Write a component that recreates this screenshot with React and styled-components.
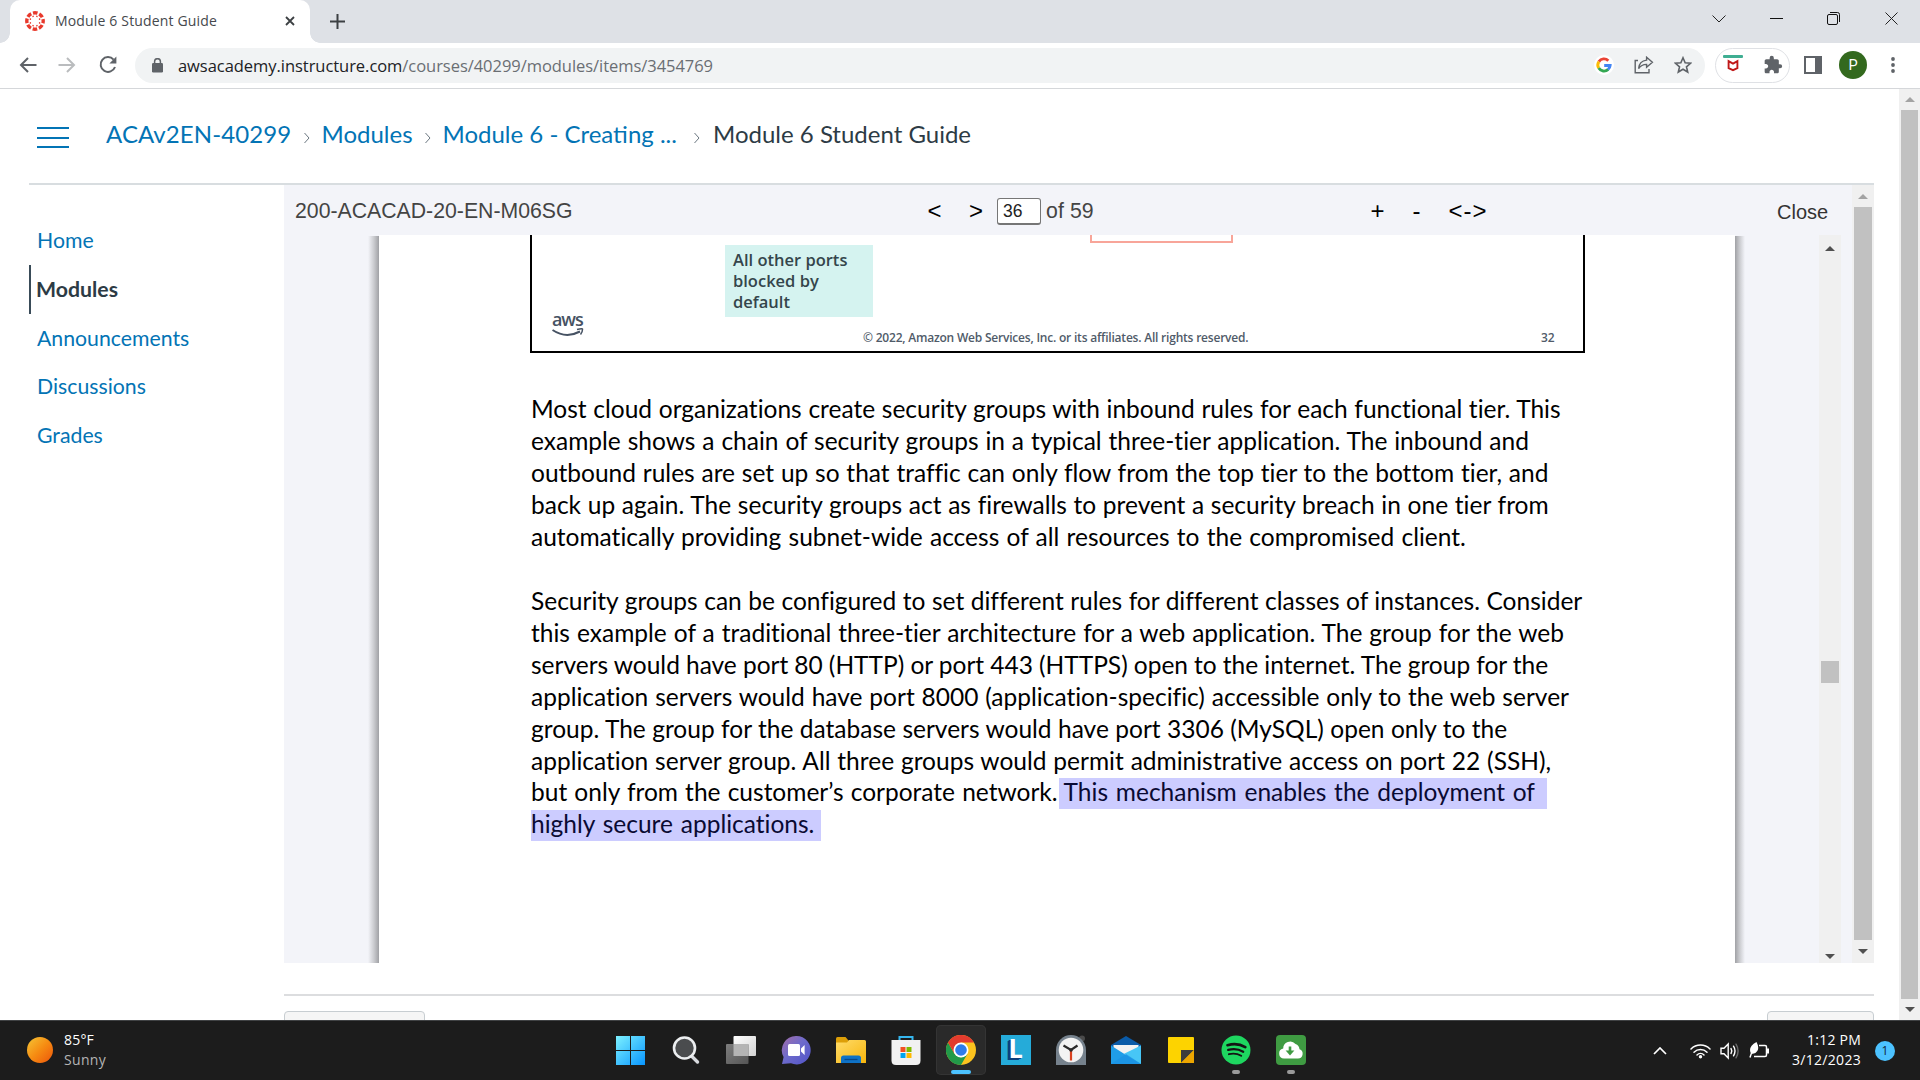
import React from "react";
import styled, { createGlobalStyle, css } from "styled-components";

const Global = createGlobalStyle`
  * { box-sizing: border-box; }
  html, body { margin: 0; padding: 0; }
  body { width: 1920px; height: 1080px; overflow: hidden; background: #fff; }
  svg { display: block; flex: none; }
`;

const ui = `"Open Sans", "Noto Sans", sans-serif`;
const lato = `Lato, "Open Sans", sans-serif`;
const arial = `"Liberation Sans", Arial, sans-serif`;

const Screen = styled.div`
  width: 1920px;
  height: 1080px;
  display: flex;
  flex-direction: column;
  overflow: hidden;
`;

const Txt = styled.span`
  display: inline-block;
  white-space: pre;
  letter-spacing: ${(p) => (p.$ls ? `${p.$ls}px` : "normal")};
  word-spacing: ${(p) => p.$ws || 0}px;
`;

/* ---------- browser chrome ---------- */

const TabStrip = styled.div`
  height: 43px;
  padding-left: 10px;
  display: flex;
  align-items: stretch;
  background: #dee1e6;
`;

const Tab = styled.div`
  position: relative;
  width: 300px;
  padding: 0 15px 1px 15px;
  display: flex;
  align-items: center;
  background: #fff;
  border-radius: 10px 10px 0 0;
  font: 14px/20px ${ui};
  color: #45494d;
  &::before, &::after {
    content: "";
    position: absolute;
    bottom: 0;
    width: 10px;
    height: 10px;
  }
  &::before { left: -10px; background: radial-gradient(circle at 0 0, transparent 9.5px, #fff 10px); }
  &::after { right: -10px; background: radial-gradient(circle at 100% 0, transparent 9.5px, #fff 10px); }
`;

const TabTitle = styled.div`
  flex: 1;
  padding: 0 0 1px 10px;
`;

const NewTab = styled.div`
  width: 54px;
  padding-bottom: 1px;
  display: flex;
  align-items: center;
  justify-content: center;
`;

const WindowButtons = styled.div`
  margin-left: auto;
  height: 37px;
  display: flex;
  align-items: center;
`;

const WinButton = styled.div`
  width: 57.5px;
  display: flex;
  justify-content: center;
`;

const Toolbar = styled.div`
  height: 46px;
  padding: 5px 0 6px;
  display: flex;
  align-items: center;
  background: #fff;
  border-bottom: 1px solid #d5d7da;
`;

const NavButtons = styled.div`
  width: 135px;
  padding: 0 0 1px 18.5px;
  display: flex;
  align-items: center;
  gap: 21.5px;
`;

const Omnibox = styled.div`
  width: 1570px;
  height: 35px;
  padding: 0 13.5px 0 17px;
  border-radius: 18px;
  display: flex;
  align-items: center;
  background: #f1f3f4;
`;

const Url = styled.div`
  flex: 1;
  padding: 1px 0 0 15px;
  font: 16.5px/24px ${ui};
  color: #6a6e73;
  b { font-weight: 400; color: #202124; }
`;

const OmniIcons = styled.div`
  display: flex;
  align-items: center;
  gap: 20px;
`;

const ExtPill = styled.div`
  width: 75px;
  height: 35px;
  margin: 0 14px 0 10px;
  padding: 0 6px 0 7px;
  border: 1px solid #dfe1e5;
  border-radius: 18px;
  display: flex;
  align-items: center;
  justify-content: space-between;
`;

const Avatar = styled.div`
  width: 28px;
  height: 28px;
  margin: 0 23.500px 0 17px;
  border-radius: 50%;
  background: #33691e;
  color: #fff;
  font: 14.5px/29px Roboto, ${arial};
  text-align: center;
`;

/* ---------- scroll bars ---------- */

const Rail = styled.div`
  width: ${(p) => p.$w}px;
  flex: none;
  display: flex;
  flex-direction: column;
  align-items: center;
  background: #f0f0f0;
`;

const ArrowBox = styled.div`
  height: ${(p) => p.$h}px;
  display: flex;
  align-items: center;
  justify-content: center;
  &::before {
    content: "";
    border: 5px solid transparent;
    ${(p) =>
      p.$down
        ? css`border-top-color: ${p.$c}; border-bottom: 0;`
        : css`border-bottom-color: ${p.$c}; border-top: 0;`}
  }
`;

const Thumb = styled.div`
  width: ${(p) => p.$w}px;
  height: ${(p) => p.$h}px;
  margin-top: ${(p) => p.$gap || 0}px;
  background: #c1c1c1;
`;

const Push = styled.div`
  flex: 1;
`;

/* ---------- course page ---------- */

const PageArea = styled.div`
  height: 931px;
  display: flex;
  background: #fff;
`;

const Course = styled.div`
  flex: 1;
  padding: 0 25px 0 29px;
  overflow: hidden;
`;

const CourseHeader = styled.header`
  height: 96px;
  padding: 31px 0 0 8px;
  display: flex;
  align-items: flex-start;
  border-bottom: 2px solid #d8dde0;
`;

const Burger = styled.div`
  width: 32px;
  height: 21px;
  margin: 7px 37px 0 0;
  display: flex;
  flex-direction: column;
  justify-content: space-between;
  i { height: 2px; background: #0374b5; }
`;

const Crumb = styled.div`
  width: ${(p) => p.$w}px;
  white-space: nowrap;
  font: 24px/28px ${lato};
  color: ${(p) => (p.$current ? "#2d3b45" : "#0374b5")};
`;

const CrumbSep = styled.div`
  width: ${(p) => p.$w}px;
  height: 35px;
  padding-left: 2px;
  display: flex;
  align-items: center;
  justify-content: center;
`;

const CourseBody = styled.div`
  display: flex;
`;

const SideNav = styled.nav`
  width: 255px;
  padding-top: 31px;
`;

const SideItem = styled.div`
  height: 48.75px;
  padding-left: ${(p) => (p.$active ? 5 : 8)}px;
  border-left: ${(p) => (p.$active ? "2px solid #394b58" : "0")};
  font: ${(p) => (p.$active ? 700 : 400)} 21.25px/48px ${lato};
  color: ${(p) => (p.$active ? "#2d3b45" : "#0374b5")};
`;

const Main = styled.main`
  width: 1590px;
`;

const Viewer = styled.section`
  height: 778px;
  display: flex;
  background: #f3f4f9;
`;

const ViewerPane = styled.div`
  width: 1568px;
  display: flex;
  flex-direction: column;
`;

const ViewerBar = styled.div`
  height: 50px;
  padding: 2px 0 0 11px;
  display: grid;
  grid-template-columns: 632.5px 443px 406.5px 1fr;
  align-items: center;
  font: 20px/24px ${arial};
  color: #444;
`;

const DocTitle = styled.div`
  font-size: 21.25px;
`;

const Pager = styled.div`
  display: flex;
  align-items: center;
  color: #000;
`;

const Key = styled.div`
  width: ${(p) => p.$w}px;
  font-size: 24px;
  white-space: nowrap;
`;

const PageInput = styled.div`
  width: 44px;
  height: 27px;
  margin-right: 5px;
  padding-left: 5px;
  border: 1px solid #767676;
  border-bottom-width: 2px;
  border-radius: 3px;
  background: #fff;
  color: #222;
  font-size: 17.5px;
  line-height: 25px;
`;

const PageCount = styled.div`
  font-size: 21.25px;
  color: #444;
`;

const CloseLink = styled.div`
  padding-top: 1px;
  color: #333;
`;

const DocArea = styled.div`
  flex: 1;
  display: flex;
`;

const Edge = styled.div`
  width: ${(p) => p.$w}px;
  margin-top: 1px;
  margin-left: ${(p) => p.$ml || 0}px;
  margin-right: ${(p) => p.$mr || 0}px;
  background: linear-gradient(${(p) => p.$dir}, #a0a1a5, #c9cace 45%, #f3f4f9);
`;

const Sheet = styled.article`
  width: 1356px;
  padding-left: 151px;
  background: #fff;
`;

const Slide = styled.div`
  width: 1055px;
  height: 118px;
  border: 2px solid #000;
  border-top: 0;
`;

const SlideTop = styled.div`
  height: 82px;
  display: flex;
  align-items: flex-start;
`;

const Callout = styled.div`
  width: 148px;
  height: 72px;
  margin: 10px 217px 0 193px;
  padding: 3.5px 0 0 8px;
  background: #d5f3f0;
  font: 600 16.5px/21.2px ${ui};
  color: #34454b;
`;

const RedBox = styled.div`
  width: 143px;
  height: 8px;
  border: 2px solid #f8a599;
  border-top: 0;
`;

const SlideFoot = styled.div`
  height: 34px;
  padding-left: 20px;
  display: flex;
  align-items: flex-start;
  font: 600 12px/16px ${ui};
  color: #505b69;
`;

const AwsMark = styled.div`
  flex: none;
  width: 311px;
  margin-top: -6px;
  font: 600 18px/16px ${ui};
  color: #465263;
  svg { margin-top: 1px; }
`;

const Legal = styled.div`
  flex: none;
  width: ${(p) => p.$w || 20}px;
  padding-top: 13px;
`;

const Copy = styled.p`
  margin: ${(p) => p.$mt}px 0 0 1px;
  font: 24.5px/31.94px ${lato};
  font-variant-ligatures: none;
  color: #000;
`;

const Line = styled.span`
  display: block;
  height: 31.94px;
  white-space: nowrap;
`;

const Mark = styled.span`
  display: inline-block;
  height: 30.5px;
  line-height: 27px;
  margin-left: ${(p) => p.$ml || 0}px;
  padding: 0 ${(p) => p.$pr}px 0 ${(p) => p.$pl || 0}px;
  background: #ccccff;
  color: #0a0a33;
`;

const Rule = styled.hr`
  height: 2px;
  margin: 31px 0 15px;
  border: 0;
  background: #dcdddf;
`;

const PagerRow = styled.div`
  display: flex;
  justify-content: space-between;
`;

const Stub = styled.div`
  width: ${(p) => p.$w}px;
  height: 40px;
  border: 1px solid #c7cdd1;
  border-radius: 4px;
  background: #f5f5f5;
`;

/* ---------- task bar ---------- */

const Taskbar = styled.footer`
  height: 60px;
  display: flex;
  background: #1c1c1c;
  border-top: 1px solid #404244;
  color: #fff;
  font: 14px/20px ${ui};
`;

const Weather = styled.div`
  width: 603px;
  padding: 8.5px 0 0 27px;
  display: flex;
  gap: 11px;
`;

const Sun = styled.div`
  width: 26px;
  height: 26px;
  margin-top: 7px;
  border-radius: 50%;
  background: linear-gradient(135deg, #f5c032 5%, #f68c12 50%, #ee5f0c 90%);
`;

const Muted = styled.div`
  color: #b4b4b4;
`;

const Dock = styled.div`
  display: flex;
  align-items: flex-start;
  padding-top: 4px;
`;

const DockItem = styled.div`
  width: 50px;
  height: 50px;
  margin: 0 2.5px;
  padding-top: 10px;
  display: flex;
  flex-direction: column;
  align-items: center;
  justify-content: space-between;
  border-radius: 5px;
  ${(p) => p.$active && css`background: #2a2a2a; box-shadow: inset 0 0 0 1px #343434;`}
`;

const Pill = styled.div`
  width: ${(p) => (p.$active ? 20 : 8)}px;
  height: 4px;
  margin-bottom: 1px;
  border-radius: 2px;
  background: ${(p) => (p.$active ? "#4cc2ff" : "#9a9a9a")};
`;

const Tray = styled.div`
  margin-left: auto;
  display: flex;
  align-items: center;
`;

const TraySlot = styled.div`
  width: ${(p) => p.$w}px;
  display: flex;
  justify-content: center;
`;

const Clock = styled.div`
  width: 81px;
  padding-bottom: 2px;
  text-align: right;
`;

const Badge = styled.div`
  width: 20px;
  height: 20px;
  margin: 0 25px 0 14px;
  border-radius: 50%;
  background: #4cc2ff;
  color: #10293a;
  font: 12px/20px ${ui};
  text-align: center;
`;

/* ---------- drawings ---------- */

const Favicon = () => (
  <svg width="20" height="20" viewBox="0 0 20 20">
    <circle cx="10" cy="10" r="8.2" fill="none" stroke="#e8392c" strokeWidth="3.4" strokeDasharray="4.6 1.84" strokeDashoffset="2.3" />
    {[0, 45, 90, 135, 180, 225, 270, 315].map((a) => (
      <circle key={a} cx="10" cy="5" r="0.8" fill="#e8392c" transform={`rotate(${a + 22.5} 10 10)`} />
    ))}
  </svg>
);

const Stroke = ({ w, h, d, c = "#5f6368", sw = 2 }) => (
  <svg width={w} height={h} viewBox={`0 0 ${w} ${h}`} fill="none" stroke={c} strokeWidth={sw}>
    <path d={d} />
  </svg>
);

const Chevron = () => <Stroke w={6} h={12} d="M.5 1L5 6L.5 11" c="#6b7780" sw={1} />;

const Reload = () => (
  <svg width="20" height="20" viewBox="0 0 20 20">
    <path d="M15.6 4.6A7.4 7.4 0 1 0 17 12" fill="none" stroke="#5f6368" strokeWidth="2" />
    <path d="M18.4 1.6v7h-7z" fill="#5f6368" />
  </svg>
);

const Lock = () => (
  <svg width="11" height="15" viewBox="0 0 11 15">
    <rect x="0" y="5" width="11" height="9.5" rx="1.2" fill="#5f6368" />
    <path d="M2.6 6V3.6a2.9 2.9 0 0 1 5.8 0V6" fill="none" stroke="#5f6368" strokeWidth="1.5" />
  </svg>
);

const GoogleG = () => (
  <svg width="20" height="20" viewBox="0 0 20 20">
    <circle cx="10" cy="10" r="10" fill="#fff" />
    <g fill="none" strokeWidth="2.9">
      <path d="M4.9 6.6A6.1 6.1 0 0 1 14.3 5.7" stroke="#ea4335" />
      <path d="M4.7 13.1A6.1 6.1 0 0 1 4.9 6.6" stroke="#fbbc05" />
      <path d="M14.2 14.4A6.1 6.1 0 0 1 4.7 13.1" stroke="#34a853" />
      <path d="M10.2 10.5h5.9A6.1 6.1 0 0 1 14 14.5" stroke="#4285f4" />
    </g>
  </svg>
);

const Share = () => (
  <svg width="20" height="18" viewBox="0 0 20 18" fill="none" stroke="#5f6368" strokeWidth="1.4">
    <path d="M4 4.5H1.2V16.8H15V13" />
    <path d="M12.6 1.2L18.4 6.2L12.6 11.2V8.4C8.8 8.4 6.4 9.8 4.6 12.6C5 8 7.8 4.6 12.6 4.1Z" />
  </svg>
);

const Star = () => (
  <svg width="18" height="18" viewBox="0 0 18 18" fill="none" stroke="#5f6368" strokeWidth="1.6">
    <path d="M9 1.8l2.15 4.95 5.4.5-4.1 3.55 1.25 5.25L9 13.25l-4.7 2.8 1.25-5.25-4.1-3.55 5.4-.5z" />
  </svg>
);

const McAfee = () => (
  <svg width="20" height="20" viewBox="0 0 20 20">
    <rect x="0" y="0" width="20" height="3" rx="1" fill="#3fae92" />
    <path d="M5.6 6.2L10 8.6l4.4-2.4v7L10 15.2l-4.4-2z" fill="none" stroke="#c01818" strokeWidth="1.9" />
  </svg>
);

const Puzzle = () => (
  <svg width="20" height="20" viewBox="0 0 24 24" fill="#5f6368">
    <path d="M20.5 11H19V7c0-1.1-.9-2-2-2h-4V3.5a2.5 2.5 0 0 0-5 0V5H4c-1.1 0-1.99.9-1.99 2v3.8H3.5c1.49 0 2.7 1.21 2.7 2.7s-1.21 2.7-2.7 2.7H2V20c0 1.1.9 2 2 2h3.8v-1.5c0-1.49 1.21-2.7 2.7-2.7s2.7 1.21 2.7 2.7V22H17c1.1 0 2-.9 2-2v-4h1.5a2.5 2.5 0 0 0 0-5z" />
  </svg>
);

const SidePanel = () => (
  <svg width="18" height="18" viewBox="0 0 18 18">
    <rect x="1" y="1" width="16" height="16" fill="none" stroke="#5f6368" strokeWidth="2" />
    <rect x="11" y="1" width="6" height="16" fill="#5f6368" />
  </svg>
);

const Kebab = () => (
  <svg width="4" height="18" viewBox="0 0 4 18" fill="#5f6368">
    <circle cx="2" cy="3" r="1.9" />
    <circle cx="2" cy="9" r="1.9" />
    <circle cx="2" cy="15" r="1.9" />
  </svg>
);

const WinLogo = () => (
  <svg width="30" height="30" viewBox="0 0 30 30">
    <defs>
      <linearGradient id="win" x1="0" y1="0" x2="29" y2="29" gradientUnits="userSpaceOnUse">
        <stop offset="0" stopColor="#7ff3ff" />
        <stop offset="1" stopColor="#0a97ff" />
      </linearGradient>
    </defs>
    <path fill="url(#win)" d="M0 1h14v14H0zM15 1h14v14H15zM0 16h14v14H0zM15 16h14v14H15z" />
  </svg>
);

const SearchIcon = () => (
  <svg width="30" height="30" viewBox="0 0 30 30">
    <path d="M20 20.5L26.5 27" stroke="#d7dade" strokeWidth="3.4" strokeLinecap="round" />
    <circle cx="13.5" cy="13" r="10.5" fill="#4a4c4e" stroke="#eceef0" strokeWidth="2.6" />
  </svg>
);

const TaskView = () => (
  <svg width="30" height="30" viewBox="0 0 30 30">
    <defs>
      <linearGradient id="tv" x1="0" y1="0" x2="1" y2="1"><stop offset="0" stopColor="#fff" /><stop offset="1" stopColor="#d2d2d2" /></linearGradient>
      <linearGradient id="tv2" x1="0" y1="0" x2="1" y2="1"><stop offset="0" stopColor="#7d7d7d" /><stop offset="1" stopColor="#555" /></linearGradient>
    </defs>
    <rect x="7.5" y="1" width="22.5" height="20" rx="1" fill="url(#tv)" />
    <rect x="0" y="9" width="22.5" height="20" rx="1" fill="url(#tv2)" />
    <path d="M7.5 9h15v12h-15z" fill="#b4b4b4" />
  </svg>
);

const Chat = () => (
  <svg width="30" height="30" viewBox="0 0 30 30">
    <defs>
      <linearGradient id="chat" x1="0" y1="0" x2="1" y2="1"><stop offset="0" stopColor="#a56ca6" /><stop offset=".45" stopColor="#6e6bcb" /><stop offset="1" stopColor="#5053c8" /></linearGradient>
    </defs>
    <path d="M15.5 1a14.2 14.2 0 1 1-5.5 27.3L1 29l1.6-7A14.2 14.2 0 0 1 15.5 1z" fill="url(#chat)" />
    <rect x="7" y="9" width="12" height="12" rx="1.5" fill="#fff" />
    <path d="M20 13.5l3.6-3.5v10l-3.6-3.5z" fill="#fff" />
  </svg>
);

const Folder = () => (
  <svg width="30" height="30" viewBox="0 0 30 30">
    <defs>
      <linearGradient id="fold" x1="0" y1="0" x2="1" y2="1"><stop offset="0" stopColor="#ffdc6a" /><stop offset="1" stopColor="#f7b50c" /></linearGradient>
    </defs>
    <path d="M0 3.5q0-1.5 1.5-1.5h8l3 3.5v5H0z" fill="#dd9f08" />
    <path d="M0 7.5h11l2-2.5h15.5q1.5 0 1.5 1.5V28H0z" fill="url(#fold)" />
    <path d="M5 28v-5q0-2.5 2.5-2.5h15q2.5 0 2.5 2.5v5z" fill="#0f72c6" />
    <path d="M8.5 24.5h13" stroke="#08488a" strokeWidth="1.3" />
  </svg>
);

const Store = () => (
  <svg width="30" height="30" viewBox="0 0 30 30">
    <path d="M8.5 7V2h13v5" fill="none" stroke="#35b6ee" strokeWidth="2" />
    <path d="M.5 5h29v20.5q0 4.5-4.5 4.5H5q-4.500 0-4.500-4.500z" fill="#f1f1f1" />
    <path d="M9.5 12h5v5h-5z" fill="#f25022" />
    <path d="M15.5 12h5v5h-5z" fill="#7fba00" />
    <path d="M9.5 18h5v5h-5z" fill="#00a4ef" />
    <path d="M15.5 18h5v5h-5z" fill="#ffb900" />
  </svg>
);

const Chrome = () => (
  <svg width="30" height="30" viewBox="0 0 48 48">
    <circle cx="24" cy="24" r="24" fill="#fcc31e" />
    <path d="M3.2 12L13.6 30L24 36L34.4 30L24 48A24 24 0 0 1 3.2 12z" fill="#229a49" />
    <path d="M3.2 12A24 24 0 0 1 44.8 12H24L13.6 30z" fill="#e33b2e" />
    <circle cx="24" cy="24" r="12" fill="#fff" />
    <circle cx="24" cy="24" r="9.3" fill="#2f7cea" />
  </svg>
);

const LBox = styled.div`
  width: 30px;
  height: 30px;
  background: #25abd9;
  color: #fff;
  font: 900 26px/27px ${lato};
  text-align: center;
  text-shadow: -1px 1px 0 #0c3f7c, -2px 1px 0 #0c3f7c, -3px 2px 0 #0c3f7c;
`;

const Launcher = () => <LBox>L</LBox>;

const AlarmClock = () => (
  <svg width="30" height="30" viewBox="0 0 30 30">
    <circle cx="26" cy="3.5" r="3" fill="#4a4a4a" />
    <path d="M0 30V15a15 15 0 0 1 30 0v15z" fill="#76828d" />
    <circle cx="15" cy="15" r="12.3" fill="#f3f3f3" />
    <path d="M7.5 10.5L15 15L21.5 10.5" fill="none" stroke="#2a2a2a" strokeWidth="2.2" />
    <path d="M15 15v10.5" stroke="#d9411e" strokeWidth="2.2" />
    <circle cx="15" cy="15" r="1.8" fill="#2a2a2a" />
  </svg>
);

const Mail = () => (
  <svg width="30" height="30" viewBox="0 0 30 30">
    <path d="M0 10L15 1l15 9v6H0z" fill="#0a5ba8" />
    <path d="M2.5 10h25v12h-25z" fill="#f2f2f2" />
    <path d="M0 10.5L15 20l15-9.5V29H0z" fill="#1f9de8" />
    <path d="M30 10.5V29L13 18.7z" fill="#47c6f6" />
    <path d="M30 29H0L15 19z" fill="#1c93e4" opacity=".75" />
  </svg>
);

const Sticky = () => (
  <svg width="30" height="30" viewBox="0 0 30 30">
    <rect x="2" y="2" width="26" height="26" rx="1" fill="#fdd300" />
    <path d="M15 15h13L15 28z" fill="#3d3d3d" />
    <path d="M28 15v13H15z" fill="#eda600" />
  </svg>
);

const Spotify = () => (
  <svg width="30" height="30" viewBox="0 0 30 30" fill="none" stroke="#141414" strokeLinecap="round">
    <circle cx="15" cy="15" r="14.5" fill="#1ed760" stroke="none" />
    <path d="M6.5 10.2c6-1.7 12.5-1.2 17.8 1.9" strokeWidth="2.7" />
    <path d="M7.2 14.9c5.2-1.4 10.6-.8 15 1.8" strokeWidth="2.3" />
    <path d="M7.9 19.2c4.2-1.1 8.6-.6 12.3 1.6" strokeWidth="1.9" />
  </svg>
);

const CloudApp = () => (
  <svg width="30" height="30" viewBox="0 0 30 30">
    <rect width="30" height="30" rx="4" fill="#3f9b42" />
    <path d="M8 23.5a5 5 0 0 1-.8-9.9A7 7 0 0 1 19.5 9a6 6 0 0 1 4 5.2 4.8 4.8 0 0 1-1.5 9.3z" fill="#fff" />
    <path d="M14 11.5v5" stroke="#3f9b42" strokeWidth="2.6" />
    <path d="M9.6 15.6h8.8L14 20.4z" fill="#3f9b42" />
  </svg>
);

const Wifi = () => (
  <svg width="21" height="16" viewBox="0 0 21 16" fill="none" stroke="#fff" strokeWidth="1.5" strokeLinecap="round">
    <path d="M1 6a13.5 13.5 0 0 1 19 0" />
    <path d="M4 9.2a9.2 9.2 0 0 1 13 0" />
    <path d="M7 12a5 5 0 0 1 7 0" />
    <circle cx="10.5" cy="13.8" r="1.7" fill="#fff" stroke="none" />
  </svg>
);

const Volume = () => (
  <svg width="20" height="18" viewBox="0 0 20 18" fill="none" stroke="#fff" strokeWidth="1.4" strokeLinecap="round">
    <path d="M1 6.2h3L8.2 2v14L4 11.8H1z" />
    <path d="M11 6.5q1.6 2.5 0 5M13.5 4.2q3 4.8 0 9.6" />
    <path d="M16 2.2q4.2 6.8 0 13.6" stroke="#6a6a6a" />
  </svg>
);

const Battery = () => (
  <svg width="21" height="18" viewBox="0 0 21 18">
    <path d="M10 3.500h6q1.500 0 1.500 1.500v8q0 1.500-1.500 1.500H5" fill="none" stroke="#fff" strokeWidth="1.500" />
    <path d="M18 6.500h2v5h-2z" fill="#fff" />
    <path d="M7.500 0Q10.500 5.500 8.300 9Q6 12.700 2 11.500Q-1.500 5 7.500 0z" fill="#fff" />
    <path d="M6 6.500Q2.500 9.500 1 15.500" fill="none" stroke="#fff" strokeWidth="1.500" />
  </svg>
);

/* each line carries the word spacing that justifies it to the printed page */
const para1 = [
  ["Most cloud organizations create security groups with inbound rules for each functional tier. This", 0.42],
  ["example shows a chain of security groups in a typical three-tier application. The inbound and", 0.63],
  ["outbound rules are set up so that traffic can only flow from the top tier to the bottom tier, and", 0.53],
  ["back up again. The security groups act as firewalls to prevent a security breach in one tier from", 0.44],
  ["automatically providing subnet-wide access of all resources to the compromised client.", 1],
];
const para2 = [
  ["Security groups can be configured to set different rules for different classes of instances. Consider", 0.26],
  ["this example of a traditional three-tier architecture for a web application. The group for the web", 0.76],
  ["servers would have port 80 (HTTP) or port 443 (HTTPS) open to the internet. The group for the", -0.17],
  ["application servers would have port 8000 (application-specific) accessible only to the web server", 0.61],
  ["group. The group for the database servers would have port 3306 (MySQL) open only to the", 0.16],
  ["application server group. All three groups would permit administrative access on port 22 (SSH),", 0.6],
];

const dock = [
  [WinLogo], [SearchIcon], [TaskView], [Chat], [Folder], [Store], [Chrome, "active"],
  [Launcher], [AlarmClock], [Mail], [Sticky], [Spotify, "open"], [CloudApp, "open"],
];

export default function App() {
  return (
    <Screen>
      <Global />
      <TabStrip>
        <Tab>
          <Favicon />
          <TabTitle><Txt $ls={0.161}>Module 6 Student Guide</Txt></TabTitle>
          <Stroke w={10} h={10} d="M1 1L9 9M9 1L1 9" c="#3c4043" sw={1.8} />
        </Tab>
        <NewTab><Stroke w={15} h={15} d="M7.5 0V15M0 7.5H15" c="#3c4043" sw={2} /></NewTab>
        <WindowButtons>
          <WinButton><Stroke w={14} h={8} d="M.5 .5L7 7L13.5 .5" c="#222" sw={1} /></WinButton>
          <WinButton><Stroke w={13} h={1} d="M0 .5H13" c="#111" sw={1} /></WinButton>
          <WinButton>
            <svg width="13" height="13" viewBox="0 0 13 13" fill="none" stroke="#111">
              <rect x=".5" y="2.5" width="10" height="10" rx="1.5" />
              <path d="M3 .5H10.5Q12.5 .5 12.5 2.5V10" />
            </svg>
          </WinButton>
          <WinButton><Stroke w={13} h={13} d="M.5 .5L12.5 12.5M12.5 .5L.5 12.5" c="#222" sw={1} /></WinButton>
        </WindowButtons>
      </TabStrip>
      <Toolbar>
        <NavButtons>
          <Stroke w={18} h={16} d="M17.5 8H2.5M9 1L2 8L9 15" />
          <Stroke w={18} h={16} d="M.5 8H15.5M9 1L16 8L9 15" c="#babcbe" />
          <Reload />
        </NavButtons>
        <Omnibox>
          <Lock />
          <Url><Txt $ls={-0.046}><b>awsacademy.instructure.com</b>/courses/40299/modules/items/3454769</Txt></Url>
          <OmniIcons><GoogleG /><Share /><Star /></OmniIcons>
        </Omnibox>
        <ExtPill><McAfee /><Puzzle /></ExtPill>
        <SidePanel />
        <Avatar>P</Avatar>
        <Kebab />
      </Toolbar>
      <PageArea>
        <Course>
          <CourseHeader>
            <Burger><i /><i /><i /></Burger>
            <Crumb $w={183.5}><Txt $ls={0.08}>ACAv2EN-40299</Txt></Crumb>
            <CrumbSep $w={32}><Chevron /></CrumbSep>
            <Crumb $w={90}>Modules</Crumb>
            <CrumbSep $w={31}><Chevron /></CrumbSep>
            <Crumb $w={236.5}>Module 6 - Creating ...</Crumb>
            <CrumbSep $w={34}><Chevron /></CrumbSep>
            <Crumb $w={260} $current>Module 6 Student Guide</Crumb>
          </CourseHeader>
          <CourseBody>
            <SideNav>
              <SideItem>Home</SideItem>
              <SideItem $active>Modules</SideItem>
              <SideItem>Announcements</SideItem>
              <SideItem>Discussions</SideItem>
              <SideItem>Grades</SideItem>
            </SideNav>
            <Main>
              <Viewer>
                <ViewerPane>
                  <ViewerBar>
                    <DocTitle>200-ACACAD-20-EN-M06SG</DocTitle>
                    <Pager>
                      <Key $w={41.5}>&lt;</Key>
                      <Key $w={28}>&gt;</Key>
                      <PageInput>36</PageInput>
                      <PageCount><Txt $ls={0.1}>of 59</Txt></PageCount>
                    </Pager>
                    <Pager>
                      <Key $w={42}>+</Key>
                      <Key $w={36}>-</Key>
                      <Key $w={40}><Txt $ls={1}>&lt;-&gt;</Txt></Key>
                    </Pager>
                    <CloseLink>Close</CloseLink>
                  </ViewerBar>
                  <DocArea>
                    <Edge $w={11} $ml={84} $dir="to left" />
                    <Sheet>
                      <Slide>
                        <SlideTop>
                          <Callout>
                            <Txt>All other ports</Txt>
                            <Txt>blocked by</Txt><br />
                            <Txt>default</Txt>
                          </Callout>
                          <RedBox />
                        </SlideTop>
                        <SlideFoot>
                          <AwsMark>
                            <Txt $ls={-1.1}>aws</Txt>
                            <svg width="32" height="9" viewBox="0 0 32 9" fill="none" stroke="#465263" strokeWidth="2">
                              <path d="M.5 2Q14 11 28 3.5" />
                              <path d="M25 1.5Q31 0 30.5 1.5Q30.5 4 28.5 6.5" strokeWidth="1.5" />
                            </svg>
                          </AwsMark>
                          <Legal $w={678}><Txt $ls={-0.21}>© 2022, Amazon Web Services, Inc. or its affiliates. All rights reserved.</Txt></Legal>
                          <Legal>32</Legal>
                        </SlideFoot>
                      </Slide>
                      <Copy $mt={40.2}>
                        {para1.map(([t, ws]) => <Line key={t}><Txt $ws={ws}>{t}</Txt></Line>)}
                      </Copy>
                      <Copy $mt={31.94}>
                        {para2.map(([t, ws]) => <Line key={t}><Txt $ws={ws}>{t}</Txt></Line>)}
                        <Line>
                          <Txt $ws={0.9}>but only from the customer’s corporate network.</Txt>
                          <Mark $ml={1} $pl={5} $pr={12}><Txt $ws={1.5}>This mechanism enables the deployment of</Txt></Mark>
                        </Line>
                        <Line><Mark $pr={7}><Txt $ws={1.6}>highly secure applications.</Txt></Mark></Line>
                      </Copy>
                    </Sheet>
                    <Edge $w={10} $mr={74} $dir="to right" />
                    <Rail $w={22}>
                      <ArrowBox $h={27} $c="#505050" />
                      <Thumb $w={18} $h={22} $gap={399} />
                      <Push />
                      <ArrowBox $h={14} $down $c="#505050" />
                    </Rail>
                  </DocArea>
                </ViewerPane>
                <Rail $w={22}>
                  <ArrowBox $h={22} $c="#a3a3a3" />
                  <Thumb $w={18} $h={733} />
                  <ArrowBox $h={23} $down $c="#505050" />
                </Rail>
              </Viewer>
              <Rule />
              <PagerRow><Stub $w={141} /><Stub $w={107} /></PagerRow>
            </Main>
          </CourseBody>
        </Course>
        <Rail $w={21}>
          <ArrowBox $h={21} $c="#a3a3a3" />
          <Thumb $w={17} $h={889} />
          <ArrowBox $h={21} $down $c="#505050" />
        </Rail>
      </PageArea>
      <Taskbar>
        <Weather>
          <Sun />
          <div>
            <div><Txt $ls={0.19}>85°F</Txt></div>
            <Muted><Txt $ls={0.309}>Sunny</Txt></Muted>
          </div>
        </Weather>
        <Dock>
          {dock.map(([Icon, state], i) => (
            <DockItem key={i} $active={state === "active"}>
              <Icon />
              {state && <Pill $active={state === "active"} />}
            </DockItem>
          ))}
        </Dock>
        <Tray>
          <TraySlot $w={40}><Stroke w={14} h={8} d="M1 7L7 1L13 7" c="#fff" sw={1.7} /></TraySlot>
          <TraySlot $w={40}><Wifi /></TraySlot>
          <TraySlot $w={19}><Volume /></TraySlot>
          <TraySlot $w={41}><Battery /></TraySlot>
          <Clock>
            <div><Txt $ls={0.237}>1:12 PM</Txt></div>
            <div><Txt $ls={0.299}>3/12/2023</Txt></div>
          </Clock>
          <Badge>1</Badge>
        </Tray>
      </Taskbar>
    </Screen>
  );
}
